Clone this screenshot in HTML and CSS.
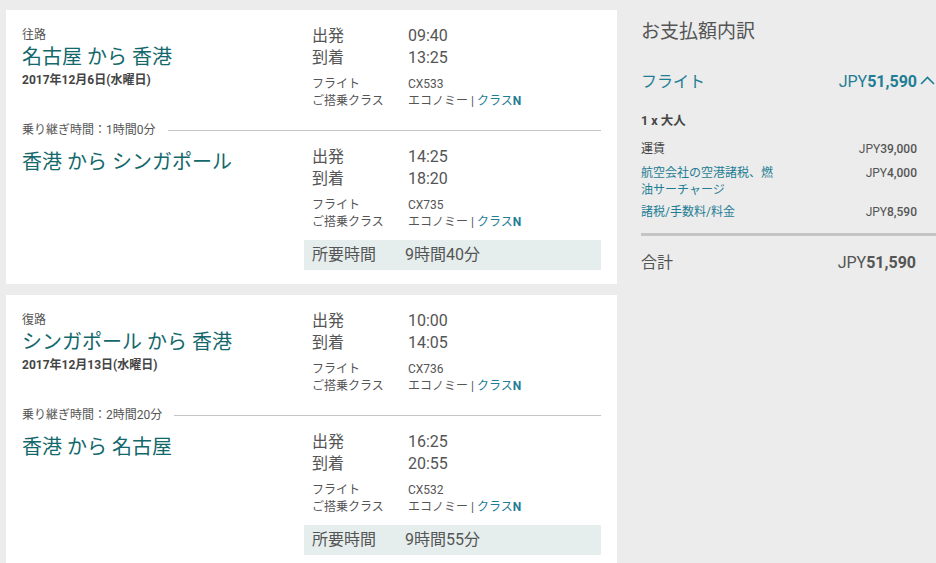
FILE: index.html
```html
<!DOCTYPE html>
<html lang="ja">
<head>
<meta charset="utf-8">
<title>旅程</title>
<link rel="stylesheet" href="styles.css">
</head>
<body>
<div class="page">
  <div class="trips">
    <section class="card">
      <div class="seg first">
        <div class="seg-left">
          <div class="dir">往路</div>
          <div class="route">名古屋 から 香港</div>
          <div class="date">2017年12月6日(水曜日)</div>
        </div>
        <div class="seg-right">
          <div class="times"><span>出発</span><span>09:40</span><span>到着</span><span>13:25</span></div>
          <div class="info"><span>フライト</span><span>CX533</span><span>ご搭乗クラス</span><span>エコノミー | <a class="cls">クラス<b>N</b></a></span></div>
        </div>
      </div>
      <div class="transit"><span>乗り継ぎ時間：1時間0分</span><i class="rule"></i></div>
      <div class="seg second">
        <div class="seg-left">
          <div class="route">香港 から シンガポール</div>
        </div>
        <div class="seg-right">
          <div class="times"><span>出発</span><span>14:25</span><span>到着</span><span>18:20</span></div>
          <div class="info"><span>フライト</span><span>CX735</span><span>ご搭乗クラス</span><span>エコノミー | <a class="cls">クラス<b>N</b></a></span></div>
          <div class="duration"><span>所要時間</span><span>9時間40分</span></div>
        </div>
      </div>
    </section>
    <section class="card">
      <div class="seg first">
        <div class="seg-left">
          <div class="dir">復路</div>
          <div class="route">シンガポール から 香港</div>
          <div class="date">2017年12月13日(水曜日)</div>
        </div>
        <div class="seg-right">
          <div class="times"><span>出発</span><span>10:00</span><span>到着</span><span>14:05</span></div>
          <div class="info"><span>フライト</span><span>CX736</span><span>ご搭乗クラス</span><span>エコノミー | <a class="cls">クラス<b>N</b></a></span></div>
        </div>
      </div>
      <div class="transit"><span>乗り継ぎ時間：2時間20分</span><i class="rule"></i></div>
      <div class="seg second">
        <div class="seg-left">
          <div class="route">香港 から 名古屋</div>
        </div>
        <div class="seg-right">
          <div class="times"><span>出発</span><span>16:25</span><span>到着</span><span>20:55</span></div>
          <div class="info"><span>フライト</span><span>CX532</span><span>ご搭乗クラス</span><span>エコノミー | <a class="cls">クラス<b>N</b></a></span></div>
          <div class="duration"><span>所要時間</span><span>9時間55分</span></div>
        </div>
      </div>
    </section>
  </div>
  <aside class="summary">
    <h2 class="sum-title">お支払額内訳</h2>
    <div class="flight-row">
      <span class="link">フライト</span>
      <span class="flight-amt">JPY<b>51,590</b>
        <svg class="chev" width="15" height="9" viewBox="0 0 15 9"><polyline points="1,8 7.5,1.5 14,8" fill="none" stroke="#1f7d95" stroke-width="1.6"/></svg>
      </span>
    </div>
    <div class="pax">1 x 大人</div>
    <div class="fee fare"><span>運賃</span><span class="amt">JPY<b>39,000</b></span></div>
    <div class="fee tax"><span class="link fee-label">航空会社の空港諸税、燃油サーチャージ</span><span class="amt">JPY<b>4,000</b></span></div>
    <div class="fee misc"><span class="link">諸税/手数料/料金</span><span class="amt">JPY<b>8,590</b></span></div>
    <div class="sep"></div>
    <div class="total"><span>合計</span><span class="total-amt">JPY<b>51,590</b></span></div>
  </aside>
</div>
</body>
</html>
```
FILE: styles.css
```css
* { box-sizing: border-box; }
html, body { margin: 0; padding: 0; }
body {
  background: #ebeceb;
  font-family: Roboto, "Noto Sans CJK JP", sans-serif;
  color: #555;
  width: 936px;
  height: 563px;
  overflow: hidden;
}
.page {
  display: flex;
  align-items: flex-start;
}
.trips {
  width: 617px;
  padding: 10px 0 0 6px;
  display: flex;
  flex-direction: column;
  gap: 11px;
}
.card {
  background: #fff;
  padding: 15px 16px 14px 16px;
}
.seg { display: flex; }
.seg-left { width: 282px; }
.seg-right { width: 297px; }
.dir {
  font-size: 12px;
  line-height: 16px;
  margin-top: 2px;
  color: #555;
}
.route {
  font-size: 20px;
  line-height: 24px;
  color: #12686b;
  margin-top: 2px;
}
.seg.second .route { margin-top: 4px; }
.date {
  font-size: 12px;
  line-height: 16px;
  font-weight: bold;
  color: #444;
  margin-top: 3px;
}
.times {
  display: grid;
  grid-template-columns: 96px 1fr;
  padding-left: 8px;
  font-size: 16px;
  line-height: 22px;
  color: #555;
}
.info {
  display: grid;
  grid-template-columns: 96px 1fr;
  padding-left: 8px;
  font-size: 12px;
  line-height: 17px;
  margin-top: 7px;
  color: #555;
}
.cls { color: #1f7d95; text-decoration: none; }
.cls b { font-weight: bold; }
.transit {
  display: flex;
  align-items: center;
  gap: 12px;
  margin-top: 12px;
  font-size: 12px;
  line-height: 16px;
  color: #555;
}
.rule {
  flex: 1;
  height: 1px;
  background: #c4c4c4;
}
.seg.second { margin-top: 8px; }
.duration {
  display: grid;
  grid-template-columns: 93px 1fr;
  margin-top: 9px;
  padding-left: 8px;
  height: 30px;
  line-height: 30px;
  font-size: 16px;
  background: #e6eeed;
  color: #555;
}
.summary {
  flex: 1;
  padding: 19px 0 0 24px;
}
.sum-title {
  margin: 0;
  font-size: 19px;
  line-height: 26px;
  font-weight: normal;
  color: #555;
}
.link { color: #1f7d95; }
.flight-row {
  display: flex;
  justify-content: space-between;
  align-items: center;
  margin-top: 26px;
  font-size: 16px;
  line-height: 22px;
  padding-right: 1px;
}
.flight-amt { color: #1f7d95; display: flex; align-items: center; }
.flight-amt b { font-weight: bold; }
.chev { margin-left: 3px; margin-top: -3px; }
.pax {
  margin-top: 20px;
  font-size: 12.5px;
  line-height: 16px;
  font-weight: bold;
  color: #444;
}
.fee {
  display: flex;
  justify-content: space-between;
  align-items: flex-start;
  font-size: 12px;
  line-height: 17px;
  padding-right: 19px;
  color: #444;
}
.fare { margin-top: 12px; }
.tax { margin-top: 7px; }
.misc { margin-top: 5px; }
.fee-label { width: 136px; }
.amt { color: #555; }
.amt b { font-weight: 500; }
.sep {
  margin-top: 12px;
  height: 3px;
  background: #c4c4c4;
}
.total {
  display: flex;
  justify-content: space-between;
  margin-top: 16px;
  padding-right: 20px;
  font-size: 16px;
  line-height: 22px;
  color: #555;
}
.total-amt b { font-weight: bold; }
```
